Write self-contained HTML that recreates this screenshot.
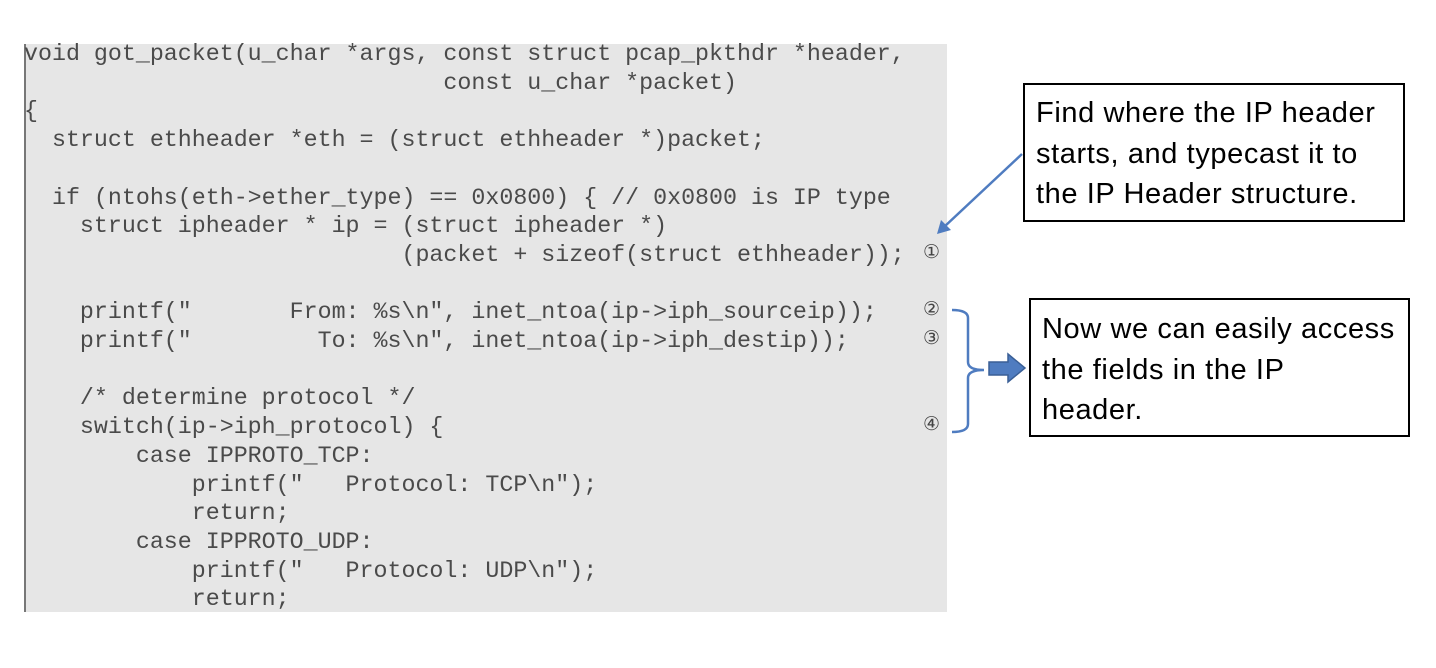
<!DOCTYPE html>
<html><head><style>
body{margin:0;width:1436px;height:668px;background:#fff;position:relative;overflow:hidden}
.code{position:absolute;left:24px;top:44px;width:923px;height:568px;background:#e6e6e6;border-left:2px solid #777;box-sizing:border-box}
pre{position:absolute;left:24px;top:40px;margin:0;font-family:"Liberation Mono",monospace;font-size:23.3px;line-height:28.7px;color:#4a4a4a;letter-spacing:0px}
.n{position:absolute;left:923px;font-family:"DejaVu Sans",sans-serif;font-size:19px;color:#444}
.box{position:absolute;border:2px solid #000;background:#fff;font-family:"Liberation Sans",sans-serif;font-size:29px;letter-spacing:0.6px;line-height:40.5px;color:#000;box-sizing:border-box;padding-left:11px;white-space:nowrap}
</style></head><body>
<div class="code"></div>
<pre>void got_packet(u_char *args, const struct pcap_pkthdr *header,
                              const u_char *packet)
{
  struct ethheader *eth = (struct ethheader *)packet;

  if (ntohs(eth-&gt;ether_type) == 0x0800) { // 0x0800 is IP type
    struct ipheader * ip = (struct ipheader *)
                           (packet + sizeof(struct ethheader));

    printf("       From: %s\n", inet_ntoa(ip-&gt;iph_sourceip));
    printf("         To: %s\n", inet_ntoa(ip-&gt;iph_destip));

    /* determine protocol */
    switch(ip-&gt;iph_protocol) {
        case IPPROTO_TCP:
            printf("   Protocol: TCP\n");
            return;
        case IPPROTO_UDP:
            printf("   Protocol: UDP\n");
            return;</pre>
<div class="n" style="top:241px">①</div>
<div class="n" style="top:298px">②</div>
<div class="n" style="top:327px">③</div>
<div class="n" style="top:413px">④</div>
<div class="box" style="left:1023px;top:83px;width:382px;height:139px;padding-top:8px">Find where the IP header<br>starts, and typecast it to<br>the IP Header structure.</div>
<div class="box" style="left:1029px;top:298px;width:381px;height:139px;padding-top:9px">Now we can easily access<br>the fields in the IP<br>header.</div>
<svg style="position:absolute;left:0;top:0" width="1436" height="668">
<line x1="1022" y1="154" x2="944" y2="227" stroke="#4f7cc0" stroke-width="2.5"/>
<polygon points="937,234 941,220 951,230" fill="#4f7cc0"/>
<path d="M952,310 Q968,310 968,318 L968,362 Q968,370 984,370 Q968,370 968,378 L968,424 Q968,432 952,432" fill="none" stroke="#4f7cc0" stroke-width="2.5"/>
<polygon points="989,362 1008,362 1008,354 1025,368 1008,382 1008,375 989,375" fill="#4f7cc0" stroke="#3a5f96" stroke-width="1.5"/>
</svg>
</body></html>
